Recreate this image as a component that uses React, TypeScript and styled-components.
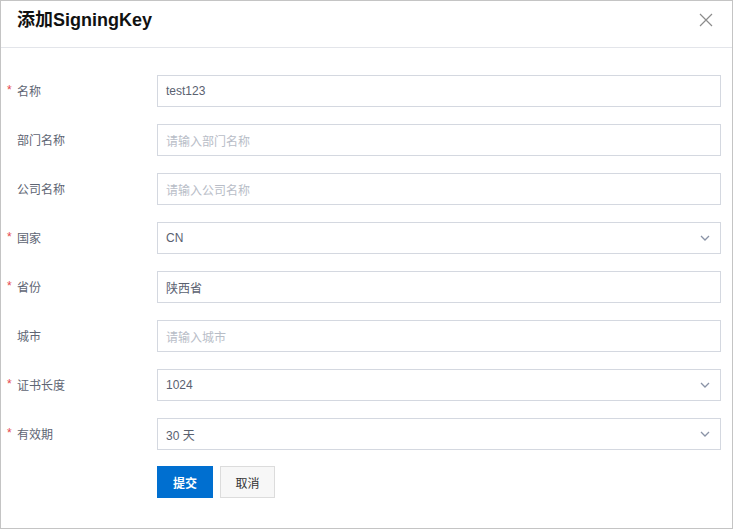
import React from 'react';
import styled, { createGlobalStyle } from 'styled-components';

const GlobalStyle = createGlobalStyle`
  html, body {
    margin: 0;
    padding: 0;
    background: #fff;
  }
  body {
    font-family: "Liberation Sans", "Noto Sans CJK SC", sans-serif;
  }
`;

type Field = {
  label: string;
  required?: boolean;
  value?: string;
  placeholder?: string;
  select?: boolean;
};

const FIELDS: Field[] = [
  { label: '名称', required: true, value: 'test123' },
  { label: '部门名称', placeholder: '请输入部门名称' },
  { label: '公司名称', placeholder: '请输入公司名称' },
  { label: '国家', required: true, value: 'CN', select: true },
  { label: '省份', required: true, value: '陕西省' },
  { label: '城市', placeholder: '请输入城市' },
  { label: '证书长度', required: true, value: '1024', select: true },
  { label: '有效期', required: true, value: '30 天', select: true },
];

const Chevron = () => (
  <svg width="10" height="6" viewBox="0 0 10 6">
    <path d="M1 1 L5 5 L9 1" fill="none" stroke="#8a93a6" strokeWidth="1.3" />
  </svg>
);

const CloseIcon = () => (
  <svg width="14" height="14" viewBox="0 0 14 14">
    <path d="M1 1 L13 13 M13 1 L1 13" stroke="#8c8c8c" strokeWidth="1.2" />
  </svg>
);

const App: React.FC = () => {
  return (
    <>
      <GlobalStyle />
      <Dialog>
        <Header>
          <Title>添加SigningKey</Title>
          <CloseButton>
            <CloseIcon />
          </CloseButton>
        </Header>
        <Body>
          {FIELDS.map((f) => (
            <Row key={f.label}>
              <Label>
                <Star>{f.required ? '*' : ''}</Star>
                {f.label}
              </Label>
              <Control>
                {f.value ? <Value>{f.value}</Value> : <Placeholder>{f.placeholder}</Placeholder>}
                {f.select && <Chevron />}
              </Control>
            </Row>
          ))}
          <Actions>
            <Button primary>提交</Button>
            <Button>取消</Button>
          </Actions>
        </Body>
      </Dialog>
    </>
  );
};

const Dialog = styled.div`
  box-sizing: border-box;
  width: 733px;
  height: 529px;
  border: 1px solid #c4c4c4;
  background: #fff;
  display: flex;
  flex-direction: column;
`;

const Header = styled.div`
  height: 46px;
  border-bottom: 1px solid #e3e5ea;
  display: flex;
  align-items: center;
  justify-content: space-between;
  padding: 0 19px 0 16px;
`;

const Title = styled.div`
  font-size: 18px;
  font-weight: bold;
  color: #111;
  margin-top: -12px;
`;

const CloseButton = styled.div`
  display: flex;
  margin-top: -8px;
`;

const Body = styled.div`
  padding: 27px 11px 0 0;
  display: flex;
  flex-direction: column;
  gap: 17px;
`;

const Row = styled.div`
  display: flex;
  align-items: center;
  height: 32px;
`;

const Label = styled.div`
  box-sizing: border-box;
  width: 156px;
  display: flex;
  align-items: center;
  font-size: 12px;
  color: #5e6573;
  padding-left: 6px;
  margin-top: -2px;
`;

const Star = styled.span`
  display: inline-block;
  width: 10px;
  color: #e5484d;
  font-size: 12px;
`;

const Control = styled.div`
  flex: 1;
  box-sizing: border-box;
  height: 32px;
  border: 1px solid #d4d8e0;
  display: flex;
  align-items: center;
  justify-content: space-between;
  padding: 0 10px 0 8px;
  font-size: 12px;
`;

const Value = styled.span`
  color: #5a6170;
`;

const Placeholder = styled.span`
  color: #b8bdc7;
`;

const Actions = styled.div`
  display: flex;
  gap: 7px;
  padding-left: 156px;
  margin-top: -1px;
`;

const Button = styled.div<{ primary?: boolean }>`
  box-sizing: border-box;
  height: 32px;
  width: ${(p) => (p.primary ? '56px' : '55px')};
  display: flex;
  align-items: center;
  justify-content: center;
  font-size: 12px;
  font-weight: ${(p) => (p.primary ? 'bold' : 'normal')};
  color: ${(p) => (p.primary ? '#fff' : '#333')};
  background: ${(p) => (p.primary ? '#006fd0' : '#f7f7f7')};
  border: 1px solid ${(p) => (p.primary ? '#006fd0' : '#dcdcdc')};
`;

export default App;
